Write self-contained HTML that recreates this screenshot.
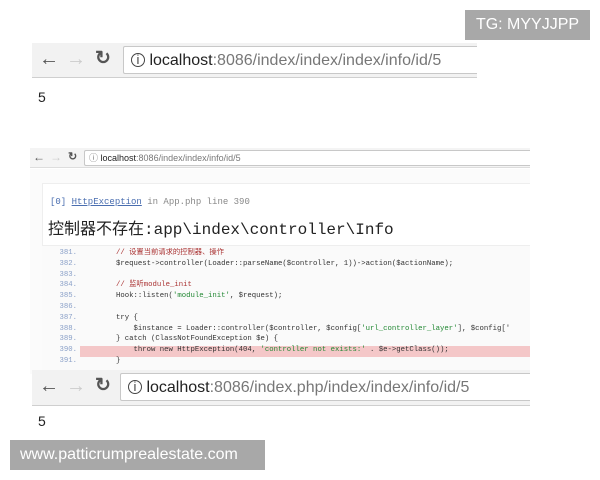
<!DOCTYPE html>
<html><head><meta charset="utf-8"><style>
*{margin:0;padding:0;box-sizing:border-box}
body{width:600px;height:480px;background:#fff;position:relative;overflow:hidden;font-family:"Liberation Sans",sans-serif}
.abs{position:absolute}
.bar{position:absolute;background:#f2f2f2;border-bottom:1px solid #cfcfcf}
.addr{position:absolute;background:#fff;border:1px solid #c8c8c8;border-right:none;border-radius:2px 0 0 2px;color:#777;white-space:nowrap}
.addr b{font-weight:normal;color:#222}
.ic{position:absolute;color:#555}
.mono{font-family:"Liberation Mono","Noto Sans CJK SC",monospace}
.ln{position:absolute;left:0;width:77px;text-align:right;color:#8aa0c8}
.cd{position:absolute;left:116px;white-space:pre;color:#333}
</style></head><body>
<div class="abs" style="left:465px;top:10px;width:125px;height:30px;background:#a8a8a8;color:#fff;font-size:16px;line-height:30px;text-align:center">TG: MYYJJPP</div>

<div class="bar" style="left:32px;top:43px;width:445px;height:35px"></div>
<div class="ic" style="left:39px;top:48px;font-size:20px">&#8592;</div>
<div class="ic" style="left:66px;top:48px;font-size:20px;color:#ccc">&#8594;</div>
<div class="ic" style="left:95px;top:47px;font-size:19px;font-weight:bold">&#8635;</div>
<div class="addr" style="left:123px;top:46px;width:354px;height:28px;font-size:16px;line-height:27px;padding-left:7px"><span style="font-size:13px;border:1.5px solid #444;border-radius:50%;display:inline-block;width:14px;height:14px;line-height:11px;text-align:center;color:#444;vertical-align:1px">i</span> <b>localhost</b>:8086/index/index/index/info/id/5</div>
<div class="abs" style="left:38px;top:89px;font-size:14px;color:#222">5</div>

<div class="abs" style="left:30px;top:148px;width:500px;height:20px;background:#f4f4f4;border-bottom:1px solid #ddd"></div>
<div class="ic" style="left:33px;top:150px;font-size:12px">&#8592;</div>
<div class="ic" style="left:50px;top:150px;font-size:12px;color:#ccc">&#8594;</div>
<div class="ic" style="left:68px;top:150px;font-size:11px;font-weight:bold">&#8635;</div>
<div class="addr" style="left:84px;top:150px;width:446px;height:16px;font-size:9px;line-height:14px;padding-left:4px">&#9432; <b>localhost</b>:8086/index/index/info/id/5</div>
<div class="abs" style="left:30px;top:169px;width:500px;height:205px;background:#fbfbfb"></div>
<div class="abs" style="left:42px;top:183px;width:488px;height:190px;background:#fff;border:1px solid #eee;border-right:none"></div>
<div class="abs mono" style="left:50px;top:197px;font-size:9px;color:#888"><span style="color:#4a6eb0">[0] <u>HttpException</u></span> in App.php line 390</div>
<div class="abs mono" style="left:48px;top:215px;font-size:16px;color:#222;white-space:nowrap">控制器不存在:app\index\controller\Info</div>
<div class="abs" style="left:42px;top:245px;width:488px;height:128px;background:#fafafa;border-top:1px solid #eee"></div>
<div class="abs" style="left:80px;top:346px;width:450px;height:11px;background:#f4c7c8"></div>
<div class="abs mono" style="left:0;top:248px;width:530px;height:125px;overflow:hidden;font-size:7.3px;line-height:10.8px">
<div style="position:relative;height:120px">
<div class="ln" style="top:0">381.</div><div class="cd" style="top:0;color:#a33">// 设置当前请求的控制器、操作</div>
<div class="ln" style="top:10.8px">382.</div><div class="cd" style="top:10.8px">$request-&gt;controller(Loader::parseName($controller, 1))-&gt;action($actionName);</div>
<div class="ln" style="top:21.6px">383.</div>
<div class="ln" style="top:32.4px">384.</div><div class="cd" style="top:32.4px;color:#a33">// 监听module_init</div>
<div class="ln" style="top:43.2px">385.</div><div class="cd" style="top:43.2px">Hook::listen(<span style="color:#283">'module_init'</span>, $request);</div>
<div class="ln" style="top:54px">386.</div>
<div class="ln" style="top:64.8px">387.</div><div class="cd" style="top:64.8px">try {</div>
<div class="ln" style="top:75.6px">388.</div><div class="cd" style="top:75.6px">    $instance = Loader::controller($controller, $config[<span style="color:#283">'url_controller_layer'</span>], $config['</div>
<div class="ln" style="top:86.4px">389.</div><div class="cd" style="top:86.4px">} catch (ClassNotFoundException $e) {</div>
<div class="ln" style="top:97.2px">390.</div><div class="cd" style="top:97.2px">    throw new HttpException(404, <span style="color:#283">'controller not exists:'</span> . $e-&gt;getClass());</div>
<div class="ln" style="top:108px">391.</div><div class="cd" style="top:108px">}</div>
</div></div>

<div class="bar" style="left:32px;top:370px;width:498px;height:36px"></div>
<div class="ic" style="left:39px;top:375px;font-size:20px">&#8592;</div>
<div class="ic" style="left:66px;top:375px;font-size:20px;color:#ccc">&#8594;</div>
<div class="ic" style="left:95px;top:374px;font-size:19px;font-weight:bold">&#8635;</div>
<div class="addr" style="left:120px;top:373px;width:410px;height:28px;font-size:16px;line-height:27px;padding-left:7px"><span style="font-size:13px;border:1.5px solid #444;border-radius:50%;display:inline-block;width:14px;height:14px;line-height:11px;text-align:center;color:#444;vertical-align:1px">i</span> <b>localhost</b>:8086/index.php/index/index/info/id/5</div>
<div class="abs" style="left:38px;top:413px;font-size:14px;color:#222">5</div>

<div class="abs" style="left:10px;top:440px;width:255px;height:30px;background:#a8a8a8;color:#fff;font-size:16px;line-height:30px;padding-left:10px">www.patticrumprealestate.com</div>
</body></html>
